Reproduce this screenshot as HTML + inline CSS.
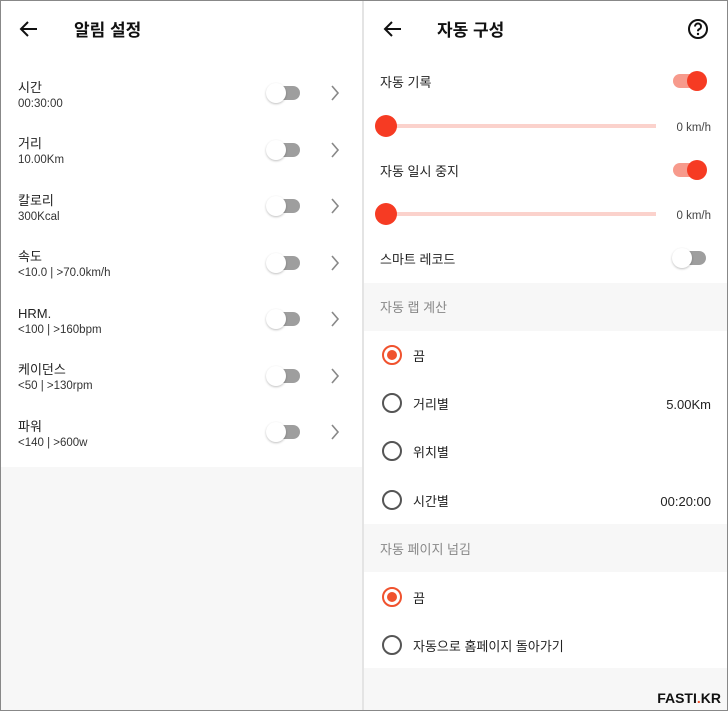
<!DOCTYPE html>
<html><head><meta charset="utf-8"><style>
*{margin:0;padding:0;box-sizing:border-box}
body{width:728px;height:711px;position:relative;background:#fff;font-family:"Liberation Sans","Noto Sans CJK KR",sans-serif;color:#222;overflow:hidden}
.a{position:absolute;white-space:nowrap;line-height:16px}
.t,.s,.g,.h{margin-top:2px}
.t{font-size:13px;color:#222}
.s{font-size:11.5px;color:#333}
.h{font-size:17px;font-weight:bold;color:#111;line-height:20px}
.g{font-size:13px;color:#888}
.tgoff{position:absolute;width:32px;height:14px;border-radius:7px;background:#9e9e9e}
.tgoff::before{content:"";position:absolute;left:-2px;top:-3px;width:20px;height:20px;border-radius:50%;background:#fff;box-shadow:0 1px 2px rgba(0,0,0,.25)}
.tgon{position:absolute;width:30px;height:14px;border-radius:7px;background:#f79a8c}
.tgon::after{content:"";position:absolute;left:14px;top:-3px;width:20px;height:20px;border-radius:50%;background:#f63b23}
.sl{position:absolute;left:386px;width:270px;height:4px;background:#fbd2cc}
.knob{position:absolute;width:22px;height:22px;border-radius:50%;background:#f63b23}
.r{position:absolute;left:382px;width:20px;height:20px;border-radius:50%;border:2px solid #555}
.r.on{border-color:#f0522e}
.r.on::after{content:"";position:absolute;left:3px;top:3px;width:10px;height:10px;border-radius:50%;background:#f0522e}
.gray{position:absolute;background:#f7f7f7}
</style></head><body>
<div class="gray" style="left:0;top:467px;width:363px;height:244px"></div>
<div class="gray" style="left:364px;top:283px;width:364px;height:48px"></div>
<div class="gray" style="left:364px;top:524px;width:364px;height:48px"></div>
<div class="gray" style="left:364px;top:668px;width:364px;height:43px"></div>
<div class="a" style="left:362px;top:0;width:2px;height:711px;background:#e4e4e4"></div>
<div class="a" style="left:0;top:0;width:728px;height:711px;border:1px solid #888"></div>

<svg class="a" style="left:19px;top:19px" width="20" height="20" viewBox="0 0 20 20"><path d="M18 10H3M9 3L2 10l7 7" stroke="#111" stroke-width="2" fill="none"/></svg>
<div class="a h" style="left:74px;top:19px">알림 설정</div>
<svg class="a" style="left:383px;top:19px" width="20" height="20" viewBox="0 0 20 20"><path d="M18 10H3M9 3L2 10l7 7" stroke="#111" stroke-width="2" fill="none"/></svg>
<div class="a h" style="left:437px;top:19px">자동 구성</div>
<svg class="a" style="left:687px;top:18px" width="22" height="22" viewBox="0 0 22 22"><circle cx="11" cy="11" r="9" stroke="#111" stroke-width="2" fill="none"/><path d="M8 8.5a3 3 0 1 1 4 2.8c-.8.4-1 1-1 2" stroke="#111" stroke-width="2" fill="none"/><circle cx="11" cy="16" r="1.2" fill="#111"/></svg>

<div class="a t" style="left:18px;top:78px">시간</div><div class="a s" style="left:18px;top:94px">00:30:00</div>
<div class="a t" style="left:18px;top:134px">거리</div><div class="a s" style="left:18px;top:150px">10.00Km</div>
<div class="a t" style="left:18px;top:191px">칼로리</div><div class="a s" style="left:18px;top:207px">300Kcal</div>
<div class="a t" style="left:18px;top:247px">속도</div><div class="a s" style="left:18px;top:263px">&lt;10.0 | &gt;70.0km/h</div>
<div class="a t" style="left:18px;top:304px">HRM.</div><div class="a s" style="left:18px;top:320px">&lt;100 | &gt;160bpm</div>
<div class="a t" style="left:18px;top:360px">케이던스</div><div class="a s" style="left:18px;top:376px">&lt;50 | &gt;130rpm</div>
<div class="a t" style="left:18px;top:417px">파워</div><div class="a s" style="left:18px;top:433px">&lt;140 | &gt;600w</div>

<div class="tgoff" style="left:268px;top:86px"></div>
<div class="tgoff" style="left:268px;top:143px"></div>
<div class="tgoff" style="left:268px;top:199px"></div>
<div class="tgoff" style="left:268px;top:256px"></div>
<div class="tgoff" style="left:268px;top:312px"></div>
<div class="tgoff" style="left:268px;top:369px"></div>
<div class="tgoff" style="left:268px;top:425px"></div>
<svg class="a" style="left:330px;top:0" width="12" height="450" viewBox="0 0 12 450" fill="none" stroke="#888" stroke-width="1.6">
<path d="M2 86l6 7-6 7M2 143l6 7-6 7M2 199l6 7-6 7M2 256l6 7-6 7M2 312l6 7-6 7M2 369l6 7-6 7M2 425l6 7-6 7"/></svg>

<div class="a t" style="left:380px;top:73px">자동 기록</div>
<div class="tgon" style="left:673px;top:74px"></div>
<div class="sl" style="top:124px"></div><div class="knob" style="left:375px;top:115px"></div>
<div class="a s" style="right:17px;top:118px;color:#444">0 km/h</div>
<div class="a t" style="left:380px;top:162px">자동 일시 중지</div>
<div class="tgon" style="left:673px;top:163px"></div>
<div class="sl" style="top:212px"></div><div class="knob" style="left:375px;top:203px"></div>
<div class="a s" style="right:17px;top:206px;color:#444">0 km/h</div>
<div class="a t" style="left:380px;top:250px">스마트 레코드</div>
<div class="tgoff" style="left:674px;top:251px"></div>

<div class="a g" style="left:380px;top:298px">자동 랩 계산</div>
<div class="r on" style="top:345px"></div><div class="a t" style="left:413px;top:347px">끔</div>
<div class="r" style="top:393px"></div><div class="a t" style="left:413px;top:395px">거리별</div><div class="a t" style="right:17px;top:395px">5.00Km</div>
<div class="r" style="top:441px"></div><div class="a t" style="left:413px;top:443px">위치별</div>
<div class="r" style="top:490px"></div><div class="a t" style="left:413px;top:492px">시간별</div><div class="a t" style="right:17px;top:492px">00:20:00</div>
<div class="a g" style="left:380px;top:540px">자동 페이지 넘김</div>
<div class="r on" style="top:587px"></div><div class="a t" style="left:413px;top:589px">끔</div>
<div class="r" style="top:635px"></div><div class="a t" style="left:413px;top:637px">자동으로 홈페이지 돌아가기</div>
<div class="a" style="right:7px;top:690px;font-size:14px;font-weight:bold;color:#111">FASTI<span style="color:#f0522e">.</span>KR</div>
</body></html>
